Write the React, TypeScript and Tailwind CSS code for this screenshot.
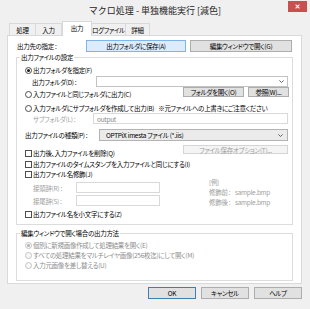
import React from 'react';

function Radio({ checked = false, disabled = false }: { checked?: boolean; disabled?: boolean }) {
  return (
    <span
      className={
        disabled
          ? 'w-[7px] h-[7px] rounded-full border border-[#c4c4c4] bg-[#f7f7f7] flex items-center justify-center shrink-0'
          : 'w-[7px] h-[7px] rounded-full border border-[#4d4d4d] bg-white flex items-center justify-center shrink-0'
      }
    >
      {checked && (
        <span className={disabled ? 'w-[3px] h-[3px] rounded-full bg-[#b0b0b0]' : 'w-[3px] h-[3px] rounded-full bg-[#1a1a1a]'} />
      )}
    </span>
  );
}

function Check() {
  return <span className="w-[7px] h-[7px] border border-[#4d4d4d] bg-white shrink-0" />;
}

function Chevron({ color = '#555' }: { color?: string }) {
  return (
    <svg width="5" height="3" viewBox="0 0 5 3" className="shrink-0">
      <path d="M0.4 0.4L2.5 2.5L4.6 0.4" fill="none" stroke={color} strokeWidth="0.9" />
    </svg>
  );
}

export default function App() {
  return (
    <div className="w-[310px] h-[309px] bg-[#f0f0f0] flex flex-col overflow-hidden whitespace-nowrap font-['Noto_Sans_CJK_JP',sans-serif] [font-feature-settings:'palt'] text-[6.5px] tracking-[-0.3px] leading-[10px] text-black">
      {/* title bar */}
      <div className="relative h-[21px] shrink-0 flex items-center justify-center">
        <span className="text-[9px] tracking-normal [font-feature-settings:normal] leading-[12px] text-[#1e1e1e]">マクロ処理 - 単独機能実行 [減色]</span>
        <div className="absolute top-[1px] right-[3px] w-[19px] h-[11px] bg-[#c75050] flex items-center justify-center">
          <svg width="5" height="5" viewBox="0 0 5 5">
            <path d="M0.6 0.6L4.4 4.4M4.4 0.6L0.6 4.4" stroke="white" strokeWidth="1.1" />
          </svg>
        </div>
      </div>

      {/* tab control */}
      <div className="ml-[7px] w-[295px] flex flex-col">
        <div className="h-[14px] flex items-end pl-[2px]">
          <div className="w-[26px] h-[12px] border-t border-l border-[#d9d9d9] bg-[#f0f0f0] flex items-center justify-center">処理</div>
          <div className="w-[27px] h-[12px] border-t border-l border-r border-[#d9d9d9] bg-[#f0f0f0] flex items-center justify-center">入力</div>
          <div className="relative z-10 w-[30px] h-[15px] -mb-[1px] border-t border-l border-r border-[#d9d9d9] bg-white flex items-start justify-center pt-[1px]">出力</div>
          <div className="w-[34px] h-[12px] border-t border-r border-[#d9d9d9] bg-[#f0f0f0] flex items-center justify-center">ログファイル</div>
          <div className="w-[24px] h-[12px] border-t border-r border-[#d9d9d9] bg-[#f0f0f0] flex items-center justify-center">詳細</div>
        </div>

        <div className="h-[249px] border border-[#d9d9d9] bg-white flex flex-col">
          {/* output destination */}
          <div className="mt-[4px] h-[12px] flex items-center pl-[9px]">
            <span className="w-[69px]">出力先の指定 :</span>
            <div className="w-[100px] h-[12px] border border-[#7eb4ea] bg-[#dcecfc] flex items-center justify-center">出力フォルダに保存(A)</div>
            <div className="ml-[4px] w-[102px] h-[12px] border border-[#adadad] bg-[#e1e1e1] flex items-center justify-center">編集ウィンドウで開く(G)</div>
          </div>

          {/* group 1 */}
          <fieldset className="m-0 p-0 ml-[8px] w-[277px] border border-[#dcdcdc]">
            <legend className="p-0 ml-[3px] px-[1px] leading-[10px]">出力ファイルの設定</legend>
            <div className="flex flex-col pb-[5px]">
              <div className="mt-[3px] h-[10px] flex items-center pl-[8px] gap-[1px]">
                <Radio checked />
                <span>出力フォルダを指定(F)</span>
              </div>
              <div className="mt-[1px] h-[11px] flex items-center pl-[15px]">
                <span className="w-[64px]">出力フォルダ(D) :</span>
                <div className="w-[192px] h-[11px] border border-[#c3c3c3] bg-white flex items-center justify-end pr-[3px]">
                  <Chevron />
                </div>
              </div>
              <div className="h-[11px] flex items-start">
                <div className="w-[166px] h-[11px] pl-[8px] pt-[3px] flex items-center gap-[1px]">
                  <Radio />
                  <span>入力ファイルと同じフォルダに出力(C)</span>
                </div>
                <div className="w-[61px] h-[10px] border border-[#adadad] bg-[#e1e1e1] flex items-center justify-center">フォルダを開く(O)</div>
                <div className="ml-[4px] w-[41px] h-[10px] border border-[#adadad] bg-[#e1e1e1] flex items-center justify-center">参照(W)...</div>
              </div>
              <div className="mt-[5px] h-[10px] flex items-center pl-[8px] gap-[1px]">
                <Radio />
                <span>入力フォルダにサブフォルダを作成して出力(B)</span>
                <span className="ml-[3px]">※元ファイルへの上書きにご注意ください</span>
              </div>
              <div className="h-[11px] flex items-center pl-[16px]">
                <span className="w-[60px] text-[#a0a0a0]">サブフォルダ(L) :</span>
                <div className="w-[195px] h-[11px] border border-[#d9d9d9] bg-white flex items-center pl-[3px] text-[#8a8a8a]">output</div>
              </div>
              <div className="mt-[5px] h-[12px] flex items-center pl-[8px]">
                <span className="w-[74px]">出力ファイルの種類(P) :</span>
                <div className="w-[189px] h-[12px] border border-[#b3b3b3] bg-[#ebebeb] flex items-center justify-between pl-[6px] pr-[4px]">
                  <span>OPTPiX imesta ファイル (*.iis)</span>
                  <Chevron />
                </div>
              </div>
              <div className="mt-[4px] h-[12px] flex">
                <div className="w-[166px] h-[8px] self-end pl-[8px] flex items-center gap-[1px]">
                  <Check />
                  <span>出力後、入力ファイルを削除(Q)</span>
                </div>
                <div className="w-[105px] h-[9px] self-start border border-[#d5d5d5] bg-[#f4f4f4] text-[#a0a0a0] flex items-center justify-center">ファイル保存オプション(T)...</div>
              </div>
              <div className="mt-[2px] h-[10px] flex items-center pl-[8px] gap-[1px]">
                <Check />
                <span>出力ファイルのタイムスタンプを入力ファイルと同じにする(I)</span>
              </div>
              <div className="h-[10px] flex items-center pl-[8px] gap-[1px]">
                <Check />
                <span>出力ファイル名修飾(J)</span>
              </div>
              <div className="-mt-[2px] flex items-start">
                <div className="w-[192px] pt-[5px] flex flex-col">
                  <div className="h-[11px] flex items-center pl-[16px]">
                    <span className="w-[43px] text-[#a0a0a0]">接頭辞(R) :</span>
                    <div className="w-[84px] h-[11px] border border-[#d9d9d9] bg-white" />
                  </div>
                  <div className="mt-[2px] h-[11px] flex items-center pl-[16px]">
                    <span className="w-[43px] text-[#a0a0a0]">接尾辞(S) :</span>
                    <div className="w-[84px] h-[11px] border border-[#d9d9d9] bg-white" />
                  </div>
                </div>
                <div className="flex flex-col text-[#a0a0a0]">
                  <span className="h-[10px]">[例]</span>
                  <div className="h-[10px] flex">
                    <span className="w-[26px]">修飾前 :</span>
                    <span>sample.bmp</span>
                  </div>
                  <div className="h-[10px] flex">
                    <span className="w-[26px]">修飾後 :</span>
                    <span>sample.bmp</span>
                  </div>
                </div>
              </div>
              <div className="mt-[2px] h-[10px] flex items-center pl-[8px] gap-[1px]">
                <Check />
                <span>出力ファイル名を小文字にする(Z)</span>
              </div>
            </div>
          </fieldset>

          {/* group 2 */}
          <fieldset className="m-0 p-0 mt-[3px] ml-[8px] w-[277px] border border-[#dcdcdc]">
            <legend className="p-0 ml-[3px] px-[1px] leading-[10px]">編集ウィンドウで開く場合の出力方法</legend>
            <div className="flex flex-col pb-[10px] text-[#8d8d8d]">
              <div className="mt-[2px] h-[10px] flex items-center pl-[8px] gap-[1px]">
                <Radio checked disabled />
                <span>個別に新規画像作成して処理結果を開く(E)</span>
              </div>
              <div className="h-[10px] flex items-center pl-[8px] gap-[1px]">
                <Radio disabled />
                <span>すべての処理結果をマルチレイヤ画像(256枚迄)にして開く(M)</span>
              </div>
              <div className="h-[10px] flex items-center pl-[8px] gap-[1px]">
                <Radio disabled />
                <span>入力元画像を差し替える(U)</span>
              </div>
            </div>
          </fieldset>
        </div>

        {/* dialog buttons */}
        <div className="mt-[3px] h-[12px] flex justify-end gap-[5px]">
          <div className="w-[48px] h-[12px] border border-[#3c7fb1] bg-[#e1e1e1] flex items-center justify-center">OK</div>
          <div className="w-[48px] h-[12px] border border-[#adadad] bg-[#e1e1e1] flex items-center justify-center">キャンセル</div>
          <div className="w-[48px] h-[12px] border border-[#adadad] bg-[#e1e1e1] flex items-center justify-center">ヘルプ</div>
        </div>
      </div>
    </div>
  );
}
